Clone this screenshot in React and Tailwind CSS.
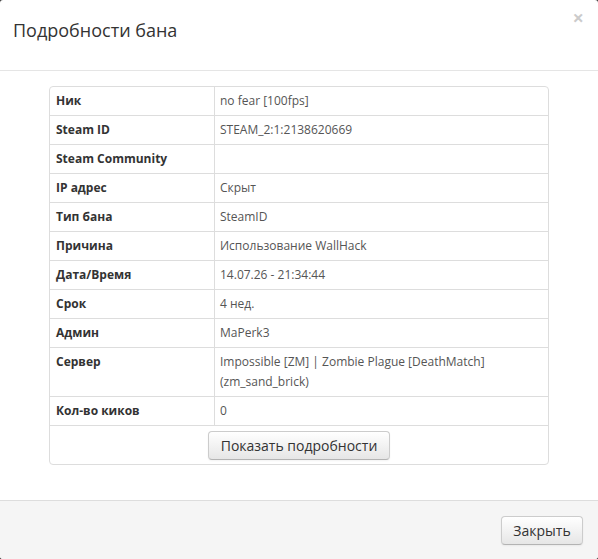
import React from "react";

const rows = [
  ["Ник", "no fear [100fps]"],
  ["Steam ID", "STEAM_2:1:2138620669"],
  ["Steam Community", ""],
  ["IP адрес", "Скрыт"],
  ["Тип бана", "SteamID"],
  ["Причина", "Использование WallHack"],
  ["Дата/Время", "14.07.26 - 21:34:44"],
  ["Срок", "4 нед."],
  ["Админ", "MaPerk3"],
  ["Сервер", "Impossible [ZM] | Zombie Plague [DeathMatch] (zm_sand_brick)"],
  ["Кол-во киков", "0"],
];

const btn =
  "rounded-[4px] border border-[#ccc] border-b-[#b3b3b3] bg-gradient-to-b from-white to-[#e6e6e6] text-[14px] leading-[20px] text-[#333] shadow-[inset_0_1px_0_rgba(255,255,255,0.2),0_1px_2px_rgba(0,0,0,0.05)]";

export default function App() {
  return (
    <div className="w-[598px] h-[559px] bg-[#3a3a3a]" style={{ fontFamily: '"Open Sans", "Noto Sans", sans-serif' }}>
      <div className="relative flex h-full flex-col overflow-hidden rounded-[3px] bg-white">
        {/* header */}
        <div className="h-[71px] shrink-0 border-b border-[#e5e5e5] px-[13px] pt-[18px]">
          <h3 className="text-[18px] leading-[24px] text-[#333]">Подробности бана</h3>
          <span className="absolute right-[14px] top-[8px] text-[20px] font-bold leading-[20px] text-black opacity-20">×</span>
        </div>

        {/* body */}
        <div className="flex-1 pt-[15px]">
          <div className="mx-auto w-[500px] overflow-hidden rounded-[4px] border border-[#ddd] text-[12px] leading-[20px]">
            {rows.map(([k, v], i) => (
              <div key={k} className={`flex ${i > 0 ? "border-t border-[#ddd]" : ""}`}>
                <div className="w-[164px] shrink-0 px-[6px] py-[4px] font-bold text-[#333]">{k}</div>
                <div className="flex-1 border-l border-[#ddd] px-[5px] py-[4px] text-[#555]">
                  {i === 9 ? (
                    <>
                      Impossible [ZM] | Zombie Plague [DeathMatch]
                      <br />
                      (zm_sand_brick)
                    </>
                  ) : (
                    v || "\u00a0"
                  )}
                </div>
              </div>
            ))}
            <div className="flex justify-center border-t border-[#ddd] pb-[4px] pt-[5px]">
              <button className={`${btn} h-[29px] w-[182px]`}>Показать подробности</button>
            </div>
          </div>
        </div>

        {/* footer */}
        <div className="flex shrink-0 justify-end border-t border-[#ddd] bg-[#f5f5f5] px-[15px] pb-[14px] pt-[15px]">
          <button className={`${btn} h-[29px] w-[82px]`}>Закрыть</button>
        </div>
      </div>
    </div>
  );
}
